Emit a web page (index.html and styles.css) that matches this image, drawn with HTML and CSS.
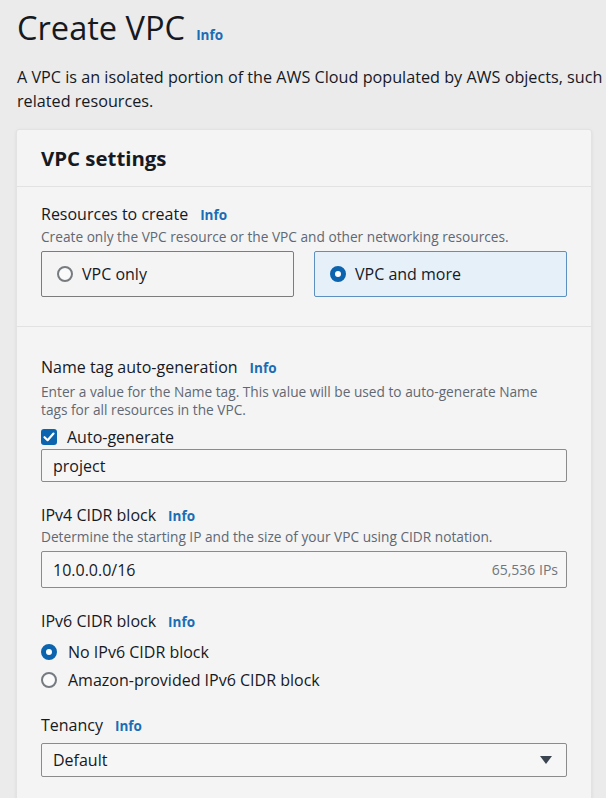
FILE: index.html
```html
<!DOCTYPE html>
<html lang="en">
<head>
<meta charset="utf-8">
<title>Create VPC</title>
<link rel="stylesheet" href="styles.css">
</head>
<body>
<div class="page">
  <h1 class="title">Create VPC <a class="info info-title">Info</a></h1>
  <p class="intro">
    <span>A VPC is an isolated portion of the AWS Cloud populated by AWS objects, such</span>
    <span>related resources.</span>
  </p>

  <section class="panel">
    <header class="panel-head"><h2>VPC settings</h2></header>

    <div class="section section-first">
      <div class="label">Resources to create <a class="info">Info</a></div>
      <div class="desc">Create only the VPC resource or the VPC and other networking resources.</div>
      <div class="tiles">
        <div class="tile"><span class="radio"></span><span>VPC only</span></div>
        <div class="tile tile-on"><span class="radio radio-on"></span><span>VPC and more</span></div>
      </div>
    </div>

    <div class="section section-main">
      <div class="field">
        <div class="label">Name tag auto-generation <a class="info">Info</a></div>
        <div class="desc desc-tight">Enter a value for the Name tag. This value will be used to auto-generate Name tags for all resources in the VPC.</div>
        <div class="check-row">
          <span class="checkbox"><svg viewBox="0 0 16 16" width="16" height="16"><path d="M3.5 8.2 L6.6 11.2 L12.5 4.6" fill="none" stroke="#fff" stroke-width="2.2" stroke-linecap="round" stroke-linejoin="round"/></svg></span>
          <span>Auto-generate</span>
        </div>
        <div class="input input-name">project</div>
      </div>

      <div class="field field-ipv4">
        <div class="label">IPv4 CIDR block <a class="info">Info</a></div>
        <div class="desc desc-one">Determine the starting IP and the size of your VPC using CIDR notation.</div>
        <div class="input input-cidr"><span>10.0.0.0/16</span><span class="hint">65,536 IPs</span></div>
      </div>

      <div class="field field-ipv6">
        <div class="label">IPv6 CIDR block <a class="info">Info</a></div>
        <div class="radio-list">
          <div class="radio-row"><span class="radio radio-on"></span><span>No IPv6 CIDR block</span></div>
          <div class="radio-row"><span class="radio"></span><span>Amazon-provided IPv6 CIDR block</span></div>
        </div>
      </div>

      <div class="field field-tenancy">
        <div class="label">Tenancy <a class="info">Info</a></div>
        <div class="select"><span>Default</span><svg class="caret" viewBox="0 0 14 10" width="14" height="10"><path d="M1 1 H13 L7 9 Z" fill="#3b4550"/></svg></div>
      </div>
    </div>
  </section>
</div>
</body>
</html>
```

FILE: styles.css
```css
html, body {
  margin: 0;
  padding: 0;
}

body {
  background: #ebebeb;
  font-family: "Open Sans", "Noto Sans", sans-serif;
  color: #16191f;
  overflow: hidden;
  height: 798px;
}

.page {
  padding-left: 17px;
  width: 574px;
}

.title {
  margin: 8px 0 0;
  font-size: 32.6px;
  font-weight: 400;
  line-height: 40px;
  display: flex;
  align-items: baseline;
}

.info {
  color: #1a6db5;
  font-size: 13.5px;
  font-weight: 700;
  line-height: 1;
  margin-left: 12px;
}

.info-title {
  margin-left: 11px;
}

.intro {
  margin: 17px 0 0;
  font-size: 16.2px;
  line-height: 24px;
  white-space: nowrap;
}

.intro span {
  display: block;
}

.panel {
  margin-top: 17px;
  width: 574px;
  background: #f4f4f4;
  border-radius: 2px;
  box-shadow: 0 0 0 1px #e3e3e3, 0 1px 4px rgba(0, 0, 0, 0.12);
  padding-bottom: 40px;
}

.panel-head {
  padding: 14px 24px;
  border-bottom: 1px solid #e2e2e2;
}

.panel-head h2 {
  margin: 0;
  font-size: 20.4px;
  line-height: 28px;
  font-weight: 700;
}

.section {
  padding: 0 24px;
}

.section-first {
  padding-top: 16px;
  padding-bottom: 29px;
  border-bottom: 1px solid #e2e2e2;
}

.section-main {
  padding-top: 29px;
}

.label {
  font-size: 16px;
  line-height: 22px;
  display: flex;
  align-items: baseline;
}

.desc {
  font-size: 13.7px;
  line-height: 20px;
  color: #5f6873;
  margin-top: 2px;
}

.desc-tight {
  line-height: 18px;
  margin-top: 5px;
  max-width: 515px;
}

.desc-one {
  line-height: 18px;
  margin-top: 2px;
}

.tiles {
  display: grid;
  grid-template-columns: 1fr 1fr;
  gap: 20px;
  margin-top: 4px;
}

.tile {
  height: 46px;
  box-sizing: border-box;
  border: 1px solid #7c7c7c;
  border-radius: 2px;
  display: flex;
  align-items: center;
  gap: 9px;
  padding-left: 15px;
  font-size: 16px;
}

.tile-on {
  background: #e5f0f9;
  border-color: #5d8fbf;
}

.radio {
  width: 16px;
  height: 16px;
  box-sizing: border-box;
  border-radius: 50%;
  border: 2px solid #767b80;
  background: #fafafa;
  flex: none;
}

.radio-on {
  border: 5px solid #0b64ad;
  background: #fff;
}

.check-row {
  margin-top: 7px;
  display: flex;
  align-items: center;
  gap: 10px;
  height: 22px;
  font-size: 16px;
}

.checkbox {
  width: 16px;
  height: 16px;
  border-radius: 3px;
  background: #0b64ad;
  display: flex;
}

.input {
  box-sizing: border-box;
  border: 1px solid #8b8b8b;
  border-radius: 2px;
  background: #f6f6f6;
  font-size: 16px;
  padding: 0 11px;
  display: flex;
  align-items: center;
  justify-content: space-between;
}

.input-name {
  margin-top: 1px;
  height: 33px;
}

.input-cidr {
  margin-top: 5px;
  height: 37px;
}

.hint {
  color: #6e757c;
  font-size: 14px;
  margin-right: -3px;
}

.field-ipv4 {
  margin-top: 22px;
}

.field-ipv6 {
  margin-top: 22px;
}

.radio-list {
  margin-top: 6px;
}

.radio-row {
  height: 28px;
  display: flex;
  align-items: center;
  gap: 11px;
  font-size: 16px;
}

.field-tenancy {
  margin-top: 20px;
}

.select {
  margin-top: 7px;
  height: 34px;
  box-sizing: border-box;
  border: 1px solid #8b8b8b;
  border-radius: 2px;
  background: #f6f6f6;
  font-size: 16px;
  padding: 0 13px 0 11px;
  display: flex;
  align-items: center;
  justify-content: space-between;
}

.caret {
  display: block;
}
```
